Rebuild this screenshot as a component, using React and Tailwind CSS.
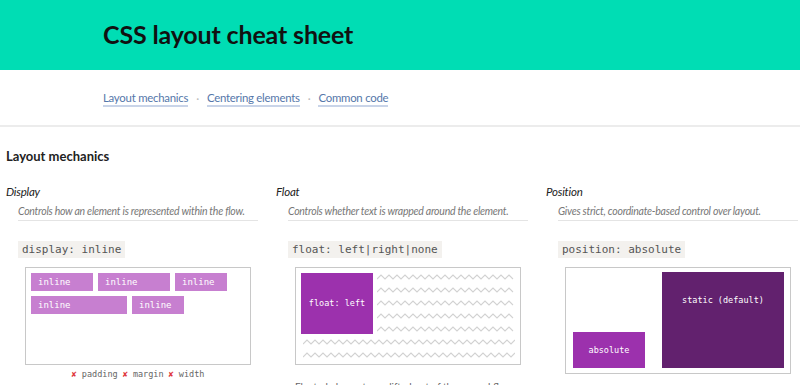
const links = ["Layout mechanics", "Centering elements", "Common code"];

function Zigzag({ width, className = "" }) {
  const step = 4;
  const pts = [];
  for (let x = 0, i = 0; x <= width; x += step, i++) {
    pts.push(`${x},${i % 2 === 0 ? 5 : 1}`);
  }
  return (
    <svg width={width} height="6" className={className}>
      <polyline points={pts.join(" ")} fill="none" stroke="#d2d2d2" strokeWidth="1.1" />
    </svg>
  );
}

function Code({ children }) {
  return (
    <div className="ml-[12px] mt-[20px] inline-block h-[17px] bg-[#f3f1ee] px-[4px] font-['DejaVu_Sans_Mono',monospace] text-[11px] leading-[17px] text-[#555]">
      {children}
    </div>
  );
}

function Column({ title, desc, children }) {
  return (
    <div className="w-[270px]">
      <div className="mt-[19px] text-[11.5px] italic leading-[16px] tracking-[-0.2px] text-[#222]">{title}</div>
      <div className="ml-[12px] mt-[4px] w-[240px] border-b border-[#e4e4e4] pb-[2px] text-[10.5px] italic leading-[14px] tracking-[-0.25px] text-[#777]">
        {desc}
      </div>
      {children}
    </div>
  );
}

function InlineBox({ w }) {
  return (
    <span
      className="h-[18px] bg-[#c77fd0] pl-[7px] font-['DejaVu_Sans_Mono',monospace] text-[9px] leading-[18px] text-white"
      style={{ width: w }}
    >
      inline
    </span>
  );
}

function Cross() {
  return <span className="text-[#e0383e]">✘</span>;
}

export default function App() {
  return (
    <div className="h-[385px] w-[800px] overflow-hidden bg-white font-['Lato',sans-serif]">
      <header className="flex h-[70px] items-center bg-[#00ddb4] pl-[103px]">
        <h1 className="text-[25px] font-bold tracking-[-0.15px] text-[#111]">CSS layout cheat sheet</h1>
      </header>

      <nav className="flex h-[57px] items-center border-b-2 border-[#ececec] pl-[103px] pt-[2px] text-[11.4px] tracking-[-0.25px]">
        {links.map((l, i) => (
          <div key={l} className="flex items-center">
            {i > 0 && <span className="mx-[8px] text-[#bbb]">·</span>}
            <span className="border-b-2 border-[#c9d4e8] leading-[15px] text-[#5577aa]">{l}</span>
          </div>
        ))}
      </nav>

      <main className="pl-[6px]">
        <h2 className="mt-[20px] text-[13px] font-bold leading-[18px] text-[#222]">Layout mechanics</h2>

        <div className="grid grid-cols-[270px_270px_270px]">
          <Column title="Display" desc="Controls how an element is represented within the flow.">
            <Code>display: inline</Code>
            <div className="ml-[19px] mt-[8px] h-[98px] w-[226px] border border-[#c8c8c8] p-[5px]">
              <div className="flex flex-wrap gap-[5px]">
                <InlineBox w={62} />
                <InlineBox w={72} />
                <InlineBox w={52} />
                <InlineBox w={96} />
                <InlineBox w={52} />
              </div>
            </div>
            <div className="ml-[19px] mt-[3px] flex w-[226px] justify-center gap-[5px] font-['DejaVu_Sans_Mono',monospace] text-[8.5px] leading-[12px] text-[#666]">
              <span><Cross /> padding</span>
              <span><Cross /> margin</span>
              <span><Cross /> width</span>
            </div>
          </Column>

          <Column title="Float" desc="Controls whether text is wrapped around the element.">
            <Code>float: left|right|none</Code>
            <div className="ml-[19px] mt-[8px] h-[98px] w-[226px] border border-[#c8c8c8] px-[5px] pt-[5px]">
              <div className="flex">
                <div className="flex h-[61px] w-[72px] items-center justify-center bg-[#9c31ad] font-['DejaVu_Sans_Mono',monospace] text-[8.5px] text-white">
                  float: left
                </div>
                <div className="ml-[4px] flex flex-col gap-[7px] pt-[1px]">
                  <Zigzag width={138} />
                  <Zigzag width={138} />
                  <Zigzag width={138} />
                  <Zigzag width={138} />
                  <Zigzag width={138} />
                </div>
              </div>
              <div className="ml-[2px] mt-[5px] flex flex-col gap-[7px]">
                <Zigzag width={212} />
                <Zigzag width={212} />
              </div>
            </div>
            <div className="ml-[19px] mt-[14px] text-[10px] leading-[14px] text-[#666]">
              Floated elements are lifted out of the normal flow.
            </div>
          </Column>

          <Column title="Position" desc="Gives strict, coordinate-based control over layout.">
            <Code>position: absolute</Code>
            <div className="relative ml-[19px] mt-[8px] h-[107px] w-[226px] border border-[#c8c8c8] pt-[4px]">
              <div className="ml-auto mr-[6px] flex h-[96px] w-[122px] justify-center bg-[#62216e] pt-[22px] font-['DejaVu_Sans_Mono',monospace] text-[8.5px] text-white">
                static (default)
              </div>
              <div className="absolute bottom-[5px] left-[7px] flex h-[36px] w-[72px] items-center justify-center bg-[#9c31ad] font-['DejaVu_Sans_Mono',monospace] text-[8.5px] text-white">
                absolute
              </div>
            </div>
          </Column>
        </div>
      </main>
    </div>
  );
}
